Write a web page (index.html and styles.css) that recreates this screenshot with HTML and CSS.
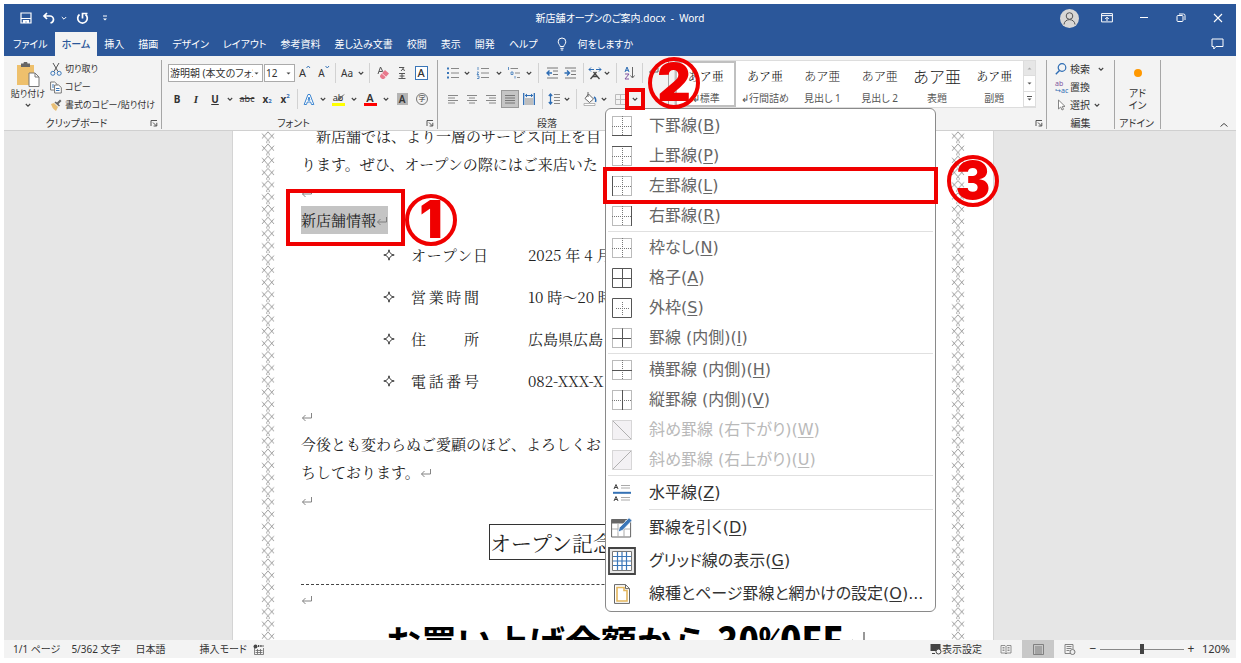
FILE: index.html
```html
<!DOCTYPE html>
<html lang="ja">
<head>
<meta charset="utf-8">
<title>新店舗オープンのご案内.docx - Word</title>
<link rel="stylesheet" href="styles.css">
</head>
<body>
<svg class="defs" width="0" height="0" aria-hidden="true">
  <symbol id="chev" viewBox="0 0 8 8"><path d="M1.8 3 4 5.2 6.2 3" fill="none" stroke="#444" stroke-width="1.1"/></symbol>
  <symbol id="launch" viewBox="0 0 8 8"><path d="M1 7V1.5h6M3 3.500 6.500 7M6.800 3.800V7H3.600" fill="none" stroke="#555"/></symbol>
  <symbol id="ret" viewBox="0 0 12 12"><path d="M10.500 2v5H1.500M4.500 4 1.500 7l3 3" fill="none" stroke="#777" stroke-width=".9"/></symbol>
  <symbol id="dots" viewBox="0 0 20 20"><path d="M.5 .5h19v19H.500zM10.500 0v20M0 10.500h20" fill="none" stroke="#777" stroke-dasharray="1 1"/></symbol>
</svg>
<div class="app">
  <header class="titlebar">
    <div class="quick">
      <button class="ic w20" aria-label="上書き保存"><svg width="12" height="12" viewBox="0 0 12 12"><path d="M1 1h10v10H1zM1 6.500h10M3.500 11V8.500h5V11" fill="none" stroke="#fff" stroke-width="1.200"/><path d="M4 8.500h4V11H6.500V9.500H5.500V11H4z" fill="#fff"/></svg></button>
      <button class="ic w20" aria-label="元に戻す"><svg width="14" height="12" viewBox="0 0 14 12"><path d="M5 1 2 4l3 3M2 4h6a3.500 3.500 0 0 1 3.500 3.500c0 1.500-1 3-3 3.500" fill="none" stroke="#fff" stroke-width="1.700"/></svg></button>
      <button class="ic w10 light" aria-label="元に戻す一覧"><svg width="8" height="8" viewBox="0 0 8 8"><path d="M1.800 3 4 5.200 6.200 3" fill="none" stroke="#fff"/></svg></button>
      <button class="ic w20" aria-label="繰り返し"><svg width="13" height="13" viewBox="0 0 13 13"><path d="M3.500 2.500a4.800 4.800 0 1 0 6 0M6.500 6.500V1.500h5" fill="none" stroke="#fff" stroke-width="1.700"/></svg></button>
      <button class="ic w20" aria-label="カスタマイズ"><svg width="8" height="8" viewBox="0 0 8 8"><path d="M2 2h4" stroke="#fff"/><path d="M2 4.500h4L4 6.500z" fill="#fff"/></svg></button>
    </div>
    <div class="doc-title">新店舗オープンのご案内.docx&nbsp; -&nbsp; Word</div>
    <div class="winctl">
      <button class="ic w37" aria-label="アカウント"><svg width="19" height="19" viewBox="0 0 19 19"><circle cx="9.500" cy="9.500" r="9.500" fill="#d9d7d5"/><circle cx="9.500" cy="7" r="3.300" fill="none" stroke="#555"/><path d="M4 15.500c.5-6.500 10.500-6.500 11 0" fill="none" stroke="#555"/></svg></button>
      <button class="ic w37" aria-label="リボンの表示オプション"><svg width="12" height="10" viewBox="0 0 12 10"><path d="M.6.6h10.800v8.300H.6zM.6 2.600h10.800M6 8V4.500M4.200 6 6 4.200 7.800 6" fill="none" stroke="#fff"/></svg></button>
      <button class="ic w37" aria-label="最小化"><svg width="10" height="10" viewBox="0 0 10 10"><path d="M1 4.500h8" stroke="#fff"/></svg></button>
      <button class="ic w37" aria-label="元のサイズに戻す"><svg width="10" height="10" viewBox="0 0 10 10"><rect x="1" y="2.500" width="6" height="6" rx="1" fill="none" stroke="#fff"/><path d="M3 1h4.500Q9 1 9 2.500V7" fill="none" stroke="#fff"/></svg></button>
      <button class="ic w37" aria-label="閉じる"><svg width="10" height="10" viewBox="0 0 10 10"><path d="m1 1 8 8M9 1 1 9" stroke="#fff" stroke-width="1.100"/></svg></button>
    </div>
  </header>
  <nav class="tabs">
    <button>ファイル</button><button class="active">ホーム</button><button>挿入</button><button>描画</button><button>デザイン</button><button>レイアウト</button><button>参考資料</button><button>差し込み文書</button><button>校閲</button><button>表示</button><button>開発</button><button>ヘルプ</button>
    <button class="tell"><svg width="10" height="14" viewBox="0 0 10 14"><path d="M3.200 9.500C3.200 8 1.200 7 1.200 4.800a3.800 3.800 0 0 1 7.600 0C8.800 7 6.800 8 6.800 9.500zM3.400 11.300h3.200M3.800 13h2.400" fill="none" stroke="#fff"/></svg>何をしますか</button>
    <button class="comment" aria-label="コメント"><svg width="13" height="12" viewBox="0 0 13 12"><path d="M1 1h11v7.500H5L2.800 11V8.500H1z" fill="none" stroke="#fff"/></svg></button>
  </nav>

  <section class="ribbon" aria-label="リボン">
    <div class="group clip">
      <div class="body">
        <button class="paste"><svg width="24" height="25" viewBox="0 0 24 25"><path d="M1 3h17v20H1z" fill="#eec06c"/><path d="M5 1.500h2.500a2 2 0 0 1 4 0H14V5H5z" fill="#666"/><path d="M13 11h6l4 4v9.500H13z" fill="#fff" stroke="#777"/><path d="M19 11v4h4" fill="none" stroke="#777"/></svg><span>貼り付け</span><svg width="8" height="8"><use href="#chev"/></svg></button>
        <div class="stack">
          <button><svg width="12" height="13" viewBox="0 0 12 13"><path d="m3 0 5 8.500M9 0 4 8.500" stroke="#555" fill="none"/><circle cx="2.800" cy="10.300" r="2" fill="none" stroke="#3a76b8"/><circle cx="9.200" cy="10.300" r="2" fill="none" stroke="#3a76b8"/></svg>切り取り</button>
          <button><svg width="12" height="13" viewBox="0 0 12 13"><path d="M.6 1h4L7 3.200V9H.6z" fill="#fff" stroke="#777"/><path d="M4.600 4h4l2.700 2.500V12H4.600z" fill="#fff" stroke="#777"/><path d="M6 7.500h3.500M6 9.500h3.500M2 4h2M2 6h2" stroke="#3a76b8"/></svg>コピー</button>
          <button><svg width="12" height="12" viewBox="0 0 12 12"><path d="m1 5 3-1 4 4-2 4C3 10 2 8 1 5z" fill="#e9bf75"/><path d="m4.500 3.500 4.500 4 1-1L8.500 5l3-3L10 .5l-3 3L5.500 2.500z" fill="#666"/></svg>書式のコピー/貼り付け</button>
        </div>
      </div>
      <div class="label"><span>クリップボード</span><button class="ic w10" aria-label="クリップボード設定"><svg width="8" height="8"><use href="#launch"/></svg></button></div>
    </div>

    <div class="group font">
      <div class="rows">
        <div class="row">
          <label class="combo name"><select aria-label="フォント"><option>游明朝 (本文のフォント)</option></select><svg width="7" height="7" viewBox="0 0 7 7"><path d="M1.500 2.500h4l-2 2z" fill="#444"/></svg></label>
          <label class="combo size"><select aria-label="フォント サイズ"><option>12</option></select><svg width="7" height="7" viewBox="0 0 7 7"><path d="M1.500 2.500h4l-2 2z" fill="#444"/></svg></label>
          <button class="ic w20 g11" aria-label="拡大">A<svg class="top" width="5" height="12" viewBox="0 0 5 12"><path d="m.5 4 1.800-2L4 4" fill="none" stroke="#3a76b8"/></svg></button>
          <button class="ic w18 g10" aria-label="縮小">A<svg class="top" width="5" height="12" viewBox="0 0 5 12"><path d="m.5 2 1.800 2L4 2" fill="none" stroke="#3a76b8"/></svg></button>
          <i class="sep w4"></i>
          <button class="ic w20 g10">Aa</button><button class="ic w8" aria-label="文字種"><svg width="8" height="8"><use href="#chev"/></svg></button>
          <i class="sep w8"></i>
          <button class="ic w20" aria-label="書式のクリア"><svg width="14" height="14" viewBox="0 0 14 14"><path d="m2 8 2.500-7L7 6M3 5.500h3" fill="none" stroke="#555"/><path d="m4 9.500 5-5.500 4 3.500-5 5.500H6L4 11z" fill="#e8798c"/><path d="m6 7.500 4 3.500" stroke="#fff" stroke-width=".7"/></svg></button>
          <button class="ic w18 ruby" aria-label="ルビ"><svg width="10" height="14" viewBox="0 0 10 14"><path d="M2 1.500h5L4 5M5 3l3 1.500M2 7.500h6M5 7.500v5M1.500 12.500h7M2.500 10h5" fill="none" stroke="#555"/></svg></button>
          <button class="ic w20 boxed"><span>A</span></button>
        </div>
        <div class="row">
          <button class="ic w18 b">B</button><button class="ic w20 b it">I</button><button class="ic w18 b"><u>U</u></button><button class="ic w12" aria-label="下線"><svg width="8" height="8"><use href="#chev"/></svg></button>
          <button class="ic w22 g9"><s>abc</s></button><button class="ic w18 b">x<sub>2</sub></button><button class="ic w18 b">x<sup>2</sup></button>
          <i class="sep w6"></i>
          <button class="ic w18" aria-label="文字の効果"><svg width="12" height="13" viewBox="0 0 12 13"><path d="M1.200 11.500 5 1.500h2l3.800 10H8.500L7.700 9H4.300l-.8 2.500zM5 7.200h2L6 4z" fill="#fff" stroke="#3a84d0"/></svg></button><button class="ic w10" aria-label="効果一覧"><svg width="8" height="8"><use href="#chev"/></svg></button>
          <button class="ic w20 hl" aria-label="蛍光ペン"><span class="mark">ab</span><svg class="pen" width="12" height="9" viewBox="0 0 12 9"><path d="m11 .8-5 6-3 1.400 1-3z" fill="#666"/></svg></button><button class="ic w12" aria-label="蛍光ペンの色"><svg width="8" height="8"><use href="#chev"/></svg></button>
          <button class="ic w20"><span class="mark red">A</span></button><button class="ic w12" aria-label="文字色"><svg width="8" height="8"><use href="#chev"/></svg></button>
          <button class="ic w20"><span class="shade">A</span></button>
          <button class="ic w20"><span class="ring">字</span></button>
        </div>
      </div>
      <div class="label"><span>フォント</span><button class="ic w10" aria-label="フォント設定"><svg width="8" height="8"><use href="#launch"/></svg></button></div>
    </div>

    <div class="group para">
      <div class="rows">
        <div class="row">
          <button class="ic w20" aria-label="箇条書き"><svg width="14" height="12" viewBox="0 0 14 12"><path d="M1 1.500h2M1 6h2M1 10.500h2" stroke="#3a76b8" stroke-width="2"/><path d="M5 1.500h8M5 6h8M5 10.500h8" stroke="#888"/></svg></button><button class="ic w8" aria-label="行頭文字"><svg width="8" height="8"><use href="#chev"/></svg></button>
          <button class="ic w24" aria-label="段落番号"><svg width="14" height="12" viewBox="0 0 14 12"><path d="M2 0v3M1 5h1.500L1 7.500h2M1 9h2v2.500H1" stroke="#3a76b8" fill="none" stroke-width=".8"/><path d="M5 1.500h8M5 6h8M5 10.500h8" stroke="#888"/></svg></button><button class="ic w8" aria-label="番号書式"><svg width="8" height="8"><use href="#chev"/></svg></button>
          <button class="ic w22" aria-label="アウトライン"><svg width="14" height="12" viewBox="0 0 14 12"><path d="M1.500 0v3M4 5h2v2.500H4zM8 9v2.500" stroke="#3a76b8" fill="none" stroke-width=".8"/><path d="M3.500 1.500H11M8 6h5M10 10.500h3" stroke="#888"/></svg></button><button class="ic w8" aria-label="リスト"><svg width="8" height="8"><use href="#chev"/></svg></button>
          <i class="sep w10"></i>
          <button class="ic w18" aria-label="インデントを減らす"><svg width="13" height="12" viewBox="0 0 13 12"><path d="M1 1h11M7 4h5M7 7.500h5M1 11h11" stroke="#777"/><path d="M6 6H1.500M3.500 3.500 1 6l2.500 2.500" fill="none" stroke="#2e6db4" stroke-width="1.400"/></svg></button>
          <button class="ic w18" aria-label="インデントを増やす"><svg width="13" height="12" viewBox="0 0 13 12"><path d="M1 1h11M7 4h5M7 7.500h5M1 11h11" stroke="#777"/><path d="M.5 6H5M3 3.500 5.500 6 3 8.500" fill="none" stroke="#2e6db4" stroke-width="1.400"/></svg></button>
          <i class="sep w8"></i>
          <button class="ic w16" aria-label="拡張書式"><svg width="14" height="13" viewBox="0 0 14 13"><path d="M1 2.500h5M8 2.500h5M3 .5l-2 2 2 2M11 .5l2 2-2 2" fill="none" stroke="#2e6db4"/><path d="m2.500 12 6-7M11.500 12l-6-7M4.500 9.500h5" fill="none" stroke="#444" stroke-width="1.300"/></svg></button><button class="ic w8" aria-label="拡張書式一覧"><svg width="8" height="8"><use href="#chev"/></svg></button>
          <i class="sep w10"></i>
          <button class="ic w18" aria-label="並べ替え"><svg width="12" height="14" viewBox="0 0 12 14"><path d="m1 6 2-5 2 5M1.700 4.300h2.600" fill="none" stroke="#2e6db4"/><path d="M1 8h4l-4 5h4" fill="none" stroke="#8054a0"/><path d="M8.500 1v10.500M6.500 9.500l2 2.500 2-2.500" fill="none" stroke="#666"/></svg></button>
          <i class="sep w6"></i>
          <button class="ic w16" aria-label="編集記号"><svg width="12" height="12" viewBox="0 0 12 12"><path d="M11 1v4H3M5 2.500 2.500 5 5 7.500" fill="none" stroke="#666"/></svg></button>
        </div>
        <div class="row">
          <button class="ic w20" aria-label="左揃え"><svg width="10" height="10" viewBox="0 0 10 10"><path d="M0 1.500h10M0 4h7M0 6.500h10M0 9h7" stroke="#888"/></svg></button>
          <button class="ic w18" aria-label="中央揃え"><svg width="10" height="10" viewBox="0 0 10 10"><path d="M0 1.500h10M2 4h6M0 6.500h10M2 9h6" stroke="#888"/></svg></button>
          <button class="ic w20" aria-label="右揃え"><svg width="10" height="10" viewBox="0 0 10 10"><path d="M0 1.500h10M3 4h7M0 6.500h10M3 9h7" stroke="#888"/></svg></button>
          <button class="ic w18 on" aria-label="両端揃え"><svg width="10" height="10" viewBox="0 0 10 10"><path d="M0 1.500h10M0 4h10M0 6.500h10M0 9h10" stroke="#777"/></svg></button>
          <button class="ic w20" aria-label="均等割り付け"><svg width="12" height="12" viewBox="0 0 12 12"><path d="M.7 0v12M11.300 0v12" stroke="#2e6db4" stroke-width="1.300"/><path d="M2 2.500h8M4 1 2.300 2.500 4 4M8 1l1.700 1.500L8 4" stroke="#2e6db4" fill="none"/><path d="M2 6h8M2 8h8M2 10h8M2 12h8" stroke="#888"/></svg></button>
          <i class="sep w6"></i>
          <button class="ic w18" aria-label="行間"><svg width="12" height="12" viewBox="0 0 12 12"><path d="M2.500 1v10M.8 3l1.700-2 1.700 2M.8 9l1.700 2 1.700-2" stroke="#2e6db4" fill="none" stroke-width="1.200"/><path d="M6 1.500h6M6 4.500h6M6 7.500h6M6 10.500h6" stroke="#888"/></svg></button><button class="ic w8" aria-label="行間一覧"><svg width="8" height="8"><use href="#chev"/></svg></button>
          <i class="sep w10"></i>
          <button class="ic w18" aria-label="塗りつぶし"><svg width="14" height="14" viewBox="0 0 14 14"><path d="m5.500 2 5 5-4 3.500-4.500-4zM5 0v5" fill="#fff" stroke="#666"/><path d="M11 5c2 1 2 3 1.500 5" stroke="#2e6db4" stroke-width="1.500" fill="none"/><path d="M1 11.500h11v2H1z" fill="#fff" stroke="#999" stroke-width=".7"/></svg></button><button class="ic w10" aria-label="塗りつぶしの色"><svg width="8" height="8"><use href="#chev"/></svg></button>
          <button class="ic w22" aria-label="罫線"><svg width="11" height="11" viewBox="0 0 11 11"><path d="M.5 .5h10v10H.500zM5.500 0v11M0 5.500h11" fill="none" stroke="#bbb"/></svg></button><button class="ic w8" aria-label="罫線一覧" aria-expanded="true"><svg width="8" height="8"><use href="#chev"/></svg></button>
        </div>
      </div>
      <div class="label"><span>段落</span><i class="w10"></i></div>
    </div>

    <div class="group styles">
      <div class="gallery">
        <button class="sel"><b>あア亜</b><span>↲標準</span></button>
        <button><b>あア亜</b><span>↲行間詰め</span></button>
        <button><b class="go">あア亜</b><span>見出し 1</span></button>
        <button><b class="go">あア亜</b><span>見出し 2</span></button>
        <button><b class="go big">あア亜</b><span>表題</span></button>
        <button><b>あア亜</b><span>副題</span></button>
        <div class="scroll">
          <button class="dim" aria-label="上へ"><svg width="7" height="7" viewBox="0 0 7 7"><path d="M1.500 4.500h4l-2-2z" fill="#aaa"/></svg></button>
          <button aria-label="下へ"><svg width="7" height="7" viewBox="0 0 7 7"><path d="M1.500 2.500h4l-2 2z" fill="#555"/></svg></button>
          <button aria-label="その他"><svg width="7" height="7" viewBox="0 0 7 7"><path d="M1 1.500h5" stroke="#555"/><path d="M1.500 3.500h4l-2 2z" fill="#555"/></svg></button>
        </div>
      </div>
      <div class="label"><span></span><button class="ic w10" aria-label="スタイル設定"><svg width="8" height="8"><use href="#launch"/></svg></button></div>
    </div>

    <div class="group edit">
      <div class="stack">
        <button><svg width="12" height="12" viewBox="0 0 12 12"><circle cx="7" cy="4.500" r="3.800" fill="none" stroke="#2e6db4" stroke-width="1.200"/><path d="M4.500 7.500.8 11.200" stroke="#2e6db4" stroke-width="1.400"/></svg>検索<svg class="far" width="8" height="8"><use href="#chev"/></svg></button>
        <button><span class="abac"><em>ab</em><span>↪ac</span></span>置換</button>
        <button><svg width="12" height="12" viewBox="0 0 12 12"><path d="M3.500 1v9l2.200-2L7 11l1.500-.7L7.200 7.400H10z" fill="#fff" stroke="#777" stroke-width=".9"/></svg>選択<svg width="8" height="8"><use href="#chev"/></svg></button>
      </div>
      <div class="label"><span>編集</span></div>
    </div>
    <div class="group addin">
      <button class="addbtn"><svg width="10" height="10" viewBox="0 0 10 10"><circle cx="5" cy="5" r="4" fill="#ff9800"/></svg><span>アド<br>イン</span></button>
      <div class="label"><span>アドイン</span></div>
    </div>
    <button class="collapse" aria-label="リボンを折りたたむ"><svg width="10" height="8" viewBox="0 0 10 8"><path d="m1.500 5.500 3.500-3 3.500 3" fill="none" stroke="#444"/></svg></button>
  </section>

  <main class="canvas">
    <article class="page">
      <svg class="edge" width="14" height="100%"><defs><pattern id="lace" width="14" height="12.200" patternUnits="userSpaceOnUse"><path d="m1 2.500 6 6.700 6-6.700M1 7.500 7 .8l6 6.700" fill="none" stroke="#888" stroke-width=".8"/><circle cx="7" cy="11.200" r="1.500" fill="none" stroke="#999" stroke-width=".7"/></pattern></defs><rect width="14" height="100%" fill="url(#lace)"/></svg>
      <div class="text">
        <p class="indent">新店舗では、より一層のサービス向上を目</p>
        <p>ります。ぜひ、オープンの際にはご来店いた</p>
        <p><svg width="12" height="12"><use href="#ret"/></svg></p>
        <p><mark>新店舗情報<svg width="12" height="12"><use href="#ret"/></svg></mark></p>
        <ul>
          <li><svg width="12" height="12"  viewBox="0 0 12 12"><path d="M6 .8Q6.500 5.500 11.200 6 6.500 6.500 6 11.200 5.500 6.500.8 6 5.500 5.500 6 .8z" fill="#fff" stroke="#222" stroke-width=".9"/></svg><span class="even">オープン日</span><span>2025 年 4 月</span></li>
          <li><svg width="12" height="12" viewBox="0 0 12 12"><path d="M6 .8Q6.500 5.500 11.200 6 6.500 6.500 6 11.200 5.500 6.500.8 6 5.500 5.500 6 .8z" fill="#fff" stroke="#222" stroke-width=".9"/></svg><span class="even four">営業時間</span><span>10 時～20 時</span></li>
          <li><svg width="12" height="12" viewBox="0 0 12 12"><path d="M6 .8Q6.500 5.500 11.200 6 6.500 6.500 6 11.200 5.500 6.500.8 6 5.500 5.500 6 .8z" fill="#fff" stroke="#222" stroke-width=".9"/></svg><span class="even four">住所</span><span>広島県広島</span></li>
          <li><svg width="12" height="12" viewBox="0 0 12 12"><path d="M6 .8Q6.500 5.500 11.200 6 6.500 6.500 6 11.200 5.500 6.500.8 6 5.500 5.500 6 .8z" fill="#fff" stroke="#222" stroke-width=".9"/></svg><span class="even four">電話番号</span><span>082-XXX-X</span></li>
        </ul>
        <p><svg width="12" height="12"><use href="#ret"/></svg></p>
        <p>今後とも変わらぬご愛顧のほど、よろしくお</p>
        <p>ちしております。<svg width="12" height="12"><use href="#ret"/></svg></p>
        <p><svg width="12" height="12"><use href="#ret"/></svg></p>
        <div class="event">オープン記念</div>
        <hr>
        <p><svg width="12" height="12"><use href="#ret"/></svg></p>
        <h1>お買い上げ金額から <span class="off">30%OFF</span><svg width="24" height="30" viewBox="0 0 24 30"><path d="M21 4v18H3M10 12l-8 9 8 8" fill="none" stroke="#777" stroke-width="1.500"/></svg></h1>
      </div>
      <svg class="edge" width="14" height="100%"><rect width="14" height="100%" fill="url(#lace)"/></svg>
    </article>
  </main>

  <footer class="status">
    <span class="s1">1/1 ページ</span><span class="s2">5/362 文字</span><span class="s3">日本語</span><span class="s4">挿入モード</span>
    <svg width="11" height="11" viewBox="0 0 11 11"><path d="M1.500 4v6.500h9V4M2.500 6.500h7M2.500 8.500h7M4.500 5v5M7.500 5v5" fill="none" stroke="#666" stroke-width=".8"/><circle cx="2.500" cy="2.500" r="2" fill="#444"/><path d="M5 2h5.500" stroke="#444" stroke-width="2" stroke-dasharray="1 .7"/></svg>
    <div class="views">
      <button class="disp"><svg width="12" height="12" viewBox="0 0 12 12"><path d="M.5 1h10v7H.500z" fill="#444"/><circle cx="8.500" cy="8.500" r="2.500" fill="#f3f3f3" stroke="#444"/><path d="M2 10.500h3" stroke="#444"/></svg>表示設定</button>
      <button class="ic w32" aria-label="閲覧モード"><svg width="12" height="11" viewBox="0 0 12 11"><path d="M1 1.500h4l1 1 1-1h4v7.500H7l-1 1-1-1H1zM6 2.500V10M2.500 3.500h2M2.500 5h2M2.500 6.500h2M7.500 3.500h2M7.500 5h2M7.500 6.500h2" fill="none" stroke="#777" stroke-width=".8"/></svg></button>
      <button class="ic w32 active" aria-label="印刷レイアウト"><svg width="11" height="11" viewBox="0 0 11 11"><path d="M.5 .5h10v10H.500zM2 3h7M2 5h7M2 7h7M2 9h7" fill="none" stroke="#777" stroke-width=".9"/></svg></button>
      <button class="ic w32" aria-label="Web レイアウト"><svg width="12" height="11" viewBox="0 0 12 11"><path d="M7 9.500H1v-9h8V5M2.500 2.500h5M2.500 4.500h5M2.500 6.500h3" fill="none" stroke="#777" stroke-width=".9"/><circle cx="8.500" cy="8" r="2.500" fill="#eee" stroke="#777"/></svg></button>
      <button class="zoomb" aria-label="縮小">−</button><input type="range" min="0" max="100" value="50" aria-label="ズーム"><button class="zoomb" aria-label="拡大">+</button>
      <span class="pct">120%</span>
    </div>
  </footer>

  <div class="menu" role="menu">
    <button role="menuitem"><svg width="20" height="20"><use href="#dots"/><path d="M0 19.500h20" stroke="#555"/></svg><span>下罫線(<u>B</u>)</span></button>
    <button role="menuitem"><svg width="20" height="20"><use href="#dots"/><path d="M0 .5h20" stroke="#555"/></svg><span>上罫線(<u>P</u>)</span></button>
    <button role="menuitem"><svg width="20" height="20"><use href="#dots"/><path d="M.5 0v20" stroke="#555"/></svg><span>左罫線(<u>L</u>)</span></button>
    <button role="menuitem"><svg width="20" height="20"><use href="#dots"/><path d="M19.500 0v20" stroke="#555"/></svg><span>右罫線(<u>R</u>)</span></button>
    <hr>
    <button role="menuitem"><svg width="20" height="20"><use href="#dots"/></svg><span>枠なし(<u>N</u>)</span></button>
    <button role="menuitem"><svg width="20" height="20"><path d="M.5 .5h19v19H.500zM10.500 0v20M0 10.500h20" fill="none" stroke="#555"/></svg><span>格子(<u>A</u>)</span></button>
    <button role="menuitem"><svg width="20" height="20"><path d="M.5 .5h19v19H.500z" fill="none" stroke="#555"/><path d="M10.500 4v13M4 10.500h13" stroke="#777" stroke-dasharray="1 1"/></svg><span>外枠(<u>S</u>)</span></button>
    <button role="menuitem"><svg width="20" height="20"><use href="#dots"/><path d="M10.500 1v18M1 10.500h18" stroke="#555"/></svg><span>罫線 (内側)(<u>I</u>)</span></button>
    <hr>
    <button role="menuitem"><svg width="20" height="20"><use href="#dots"/><path d="M0 10.500h20" stroke="#555"/></svg><span>横罫線 (内側)(<u>H</u>)</span></button>
    <button role="menuitem"><svg width="20" height="20"><use href="#dots"/><path d="M10.500 0v20" stroke="#555"/></svg><span>縦罫線 (内側)(<u>V</u>)</span></button>
    <button role="menuitem" disabled><svg width="20" height="20"><path d="M.5 .5h19v19H.500z" fill="#f3f1f4" stroke="#b5b5b5" stroke-dasharray="1 1"/><path d="m1 1 18 18" stroke="#b0b0b0"/></svg><span>斜め罫線 (右下がり)(<u>W</u>)</span></button>
    <button role="menuitem" disabled><svg width="20" height="20"><path d="M.5 .5h19v19H.500z" fill="#f3f1f4" stroke="#b5b5b5" stroke-dasharray="1 1"/><path d="M1 19 19 1" stroke="#b0b0b0"/></svg><span>斜め罫線 (右上がり)(<u>U</u>)</span></button>
    <hr>
    <button role="menuitem" class="dark"><svg width="20" height="20" viewBox="0 0 20 20"><path d="m2 6 2-4.500L6 6M2.700 4.500h2.600M2 18l2-4.500L6 18M2.700 16.500h2.600" fill="none" stroke="#444"/><path d="M9 2.500h9M9 5h9M9 14.500h9M9 17h9" stroke="#aaa"/><path d="M1 9.800h18" stroke="#3572b5" stroke-width="2"/></svg><span>水平線(<u>Z</u>)</span></button>
    <hr class="inset">
    <button role="menuitem" class="dark tall"><svg width="22" height="21" viewBox="0 0 22 21"><path d="M.6 2.500h19v17.500H.6z" fill="#fff" stroke="#666"/><path d="M.6 2.500h14v4H.6z" fill="#666"/><path d="M1 12h18M7 7v13M13 7v13" stroke="#aaa"/><path d="m7 15 1.500-4.500L18 .8l3 2.700-9.500 9.800z" fill="#3a76b8" stroke="#fff" stroke-width=".7"/></svg><span>罫線を引く(<u>D</u>)</span></button>
    <button role="menuitem" class="dark tall checked"><svg width="28" height="28" viewBox="0 0 28 28"><path d="M1 1h26v26H1z" fill="#e8e8e8" stroke="#444" stroke-width="1.800"/><path d="M4.500 4.500h19v19h-19z" fill="#fff" stroke="#777"/><path d="M9.500 5v18M14 5v18M18.500 5v18M5 9.500h18M5 14h18M5 18.500h18" stroke="#3a76b8" stroke-width="1.200"/></svg><span>グリッド線の表示(<u>G</u>)</span></button>
    <button role="menuitem" class="dark tall"><svg width="20" height="20" viewBox="0 0 20 20"><path d="M2.500.6h11l4 4v14.800h-15z" fill="#fff" stroke="#666"/><path d="M5 3.500h7v3h3V17H5z" fill="none" stroke="#e3b65e" stroke-width="1.600"/><path d="M13.500.6v4h4" fill="none" stroke="#666"/></svg><span>線種とページ罫線と網かけの設定(<u>O</u>)...</span></button>
  </div>

  <div class="frame f1"></div><div class="frame f2"></div><div class="frame f3"></div>
  <div class="num n1">1</div><div class="num n2">2</div><div class="num n3">3</div>
</div>
</body>
</html>
```
FILE: styles.css
```css
* { box-sizing: border-box; }
body {
  margin: 0;
  background: #fff;
  color: #333;
  font: 10px/14px "Noto Sans", "Noto Sans CJK JP", sans-serif;
  font-feature-settings: "palt";
}
.defs { position: absolute; }
button {
  margin: 0; padding: 0; border: 0; background: none;
  color: inherit; font: inherit; font-feature-settings: inherit; white-space: nowrap;
}
svg { display: block; flex: none; }
.app {
  position: relative;
  display: flex; flex-direction: column;
  height: 100vh;
  border: 4px solid #fff; border-right-width: 5px; border-bottom-width: 5px;
}

/* Fixed-size icon cells */
.ic { display: flex; align-items: center; justify-content: center; flex: none; height: 18px; }
.w4 { width: 4px; } .w6 { width: 6px; } .w8 { width: 8px; } .w10 { width: 10px; }
.w12 { width: 12px; } .w16 { width: 16px; } .w18 { width: 18px; } .w20 { width: 20px; }
.w22 { width: 22px; } .w24 { width: 24px; } .w32 { width: 32px; } .w37 { width: 37px; }
.sep {
  flex: none; height: 20px;
  background: linear-gradient(#d2d2d2, #d2d2d2) center / 1px 100% no-repeat;
}

/* Title bar */
.titlebar {
  display: grid; grid-template-columns: 1fr auto 1fr; align-items: center;
  flex: none; height: 28px;
  background: #2b579a; color: #fff;
}
.quick { display: flex; align-items: center; padding-left: 12px; gap: 3px; }
.quick .w10 { margin-left: -3px; }
.doc-title { font-size: 10px; }
.winctl { display: flex; justify-content: flex-end; }
.tabs { display: flex; flex: none; height: 24px; background: #2b579a; color: #fff; padding-left: 2px; }
.tabs button { padding: 0 7px; }
.tabs .active { background: #f3f3f3; color: #2b579a; font-weight: 500; }
.tabs .tell { display: flex; align-items: center; gap: 11px; padding-left: 12px; }
.tabs .comment { margin-left: auto; padding: 0 12px; }

/* Ribbon */
.ribbon {
  display: flex; flex: none; height: 75px; padding: 4px 0 0;
  background: #f3f3f3; border-bottom: 1px solid #d0d0d0;
}
.group { display: flex; flex-direction: column; flex: none; border-right: 1px solid #a6a6a6; height: 69px; }
.label { display: flex; align-items: center; margin-top: auto; height: 12px; padding-right: 2px; }
.label span { flex: 1; text-align: center; }
.clip { width: 158px; }
.body { display: flex; font-size: 9px; }
.paste { display: flex; flex-direction: column; align-items: center; width: 46px; padding: 2px 0 0 2px; }
.stack { display: flex; flex-direction: column; }
.stack button { display: flex; align-items: center; height: 18px; gap: 3px; }
.font { width: 276px; }
.font .rows { padding-left: 6px; }
.para { width: 231px; }
.para .rows { padding-left: 5px; }
.rows { display: flex; flex-direction: column; gap: 8px; padding-top: 4px; }
.row { display: flex; align-items: center; height: 18px; }
.combo { display: flex; align-items: center; height: 18px; background: #fff; border: 1px solid #ababab; padding-right: 2px; }
.combo select {
  flex: 1; min-width: 0; width: 100%; padding: 0 0 0 1px;
  appearance: none; border: 0; background: none;
  font: inherit; font-feature-settings: inherit; color: inherit; text-overflow: clip;
}
.name { width: 95px; margin-right: 1px; }
.size { width: 31px; }
.g11 { font-size: 11px; } .g10 { font-size: 10px; } .g9 { font-size: 9px; }
.top { align-self: flex-start; }
.b { font-weight: 700; font-size: 10px; }
.it { font-style: italic; font-family: "Liberation Serif", serif; font-size: 11px; }
.b sub, .b sup { font-size: 6px; line-height: 6px; color: #2e6db4; }
.b sub { align-self: flex-end; margin-bottom: 4px; }
.b sup { align-self: flex-start; margin-top: 3px; }
.boxed span { border: 1px solid #3a76b8; background: #fff; width: 13px; line-height: 12px; font-size: 11px; font-weight: 500; }
.mark { border-bottom: 3px solid #ff0; line-height: 10px; width: 13px; font-size: 9px; }
.red { border-color: #f00; font-size: 11px; font-weight: 600; }
.hl { position: relative; }
.pen { position: absolute; right: 2px; top: 3px; }
.shade { background: #b4b4b4; width: 11px; line-height: 12px; font-weight: 600; }
.ring { border: 1px solid #777; border-radius: 50%; width: 12px; height: 12px; font-size: 7px; line-height: 10px; }
.on { background: #c5c5c5; border: 1px solid #999; }

.styles { width: 378px; }
.gallery { display: flex; height: 48px; margin: 0 10px 0 5px; background: #fff; border: 1px solid #ddd; }
.gallery > button { display: flex; flex-direction: column; align-items: center; justify-content: space-between; flex: 1; padding: 5px 0 2px; }
.gallery b { font: 400 12px/20px "Noto Serif CJK JP", "Noto Sans CJK JP", serif; color: #222; font-feature-settings: normal; }
.gallery .go { font-family: "Noto Sans CJK JP", sans-serif; font-weight: 300; }
.gallery .big { font-size: 16px; }
.gallery span { color: #555; }
.gallery .sel { border: 2px solid #c0c0c0; padding: 3px 0 0; }
.scroll { display: flex; flex-direction: column; width: 12px; }
.scroll button { display: flex; align-items: center; justify-content: center; flex: 1; border: 1px solid #ddd; border-width: 0 0 1px 1px; }
.scroll .dim { background: #e6e6e6; }
.edit { width: 68px; padding-left: 8px; }
.edit .label { padding-right: 8px; }
.edit .far { margin-left: 4px; }
.abac { display: flex; flex-direction: column; width: 12px; font-size: 7px; line-height: 7px; color: #2e6db4; }
.abac em { font-style: normal; color: #8054a0; text-align: left; }
.addin { width: 46px; }
.addbtn { display: flex; flex-direction: column; align-items: center; gap: 9px; padding-top: 8px; line-height: 12px; }
.collapse { margin: auto 7px 0 auto; padding-bottom: 1px; }

/* Document */
.canvas { flex: 1; min-height: 0; overflow: hidden; background: #e6e6e6; padding-right: 14px; }
.page {
  display: flex; justify-content: space-between;
  width: 762px; height: 100%; margin: 0 auto; padding: 0 28px;
  background: #fff; border: 1px solid #d4d4d4; border-width: 0 1px;
}
.edge { height: 100%; }
.text {
  flex: 1; margin-top: -9px; padding: 0 26px;
  font: 400 15px/28px "Noto Serif CJK JP", "Noto Sans CJK JP", serif;
  font-feature-settings: normal; color: #222;
}
.text p { margin: 0; height: 28px; white-space: nowrap; }
.text svg { display: inline-block; vertical-align: -1px; }
.indent { padding-left: 15px; }
mark { display: inline-block; background: #c4c4c4; color: inherit; }
ul { list-style: none; margin: 0; padding: 0 0 0 82px; }
li { display: flex; align-items: center; height: 42px; white-space: nowrap; }
.even { width: 77px; margin: 0 40px 0 16px; text-align-last: justify; }
.four { width: 68px; margin-right: 49px; }
.event {
  width: 248px; margin: 10px auto 0;
  border: 1px solid #333; font-size: 21px; line-height: 34px; white-space: nowrap;
}
.text hr { margin: 24px 0 0; border: 0; border-top: 1px dashed #444; }
h1 { margin: 4px 0 0; padding-left: 84px; font: 700 36px/44px "Noto Sans CJK JP", sans-serif; color: #000; white-space: nowrap; }
.off { font-feature-settings: "hwid"; font-size: 42px; }

/* Status bar */
.status { display: flex; align-items: center; flex: none; height: 18px; padding-left: 9px; background: #f3f3f3; }
.s1 { margin-right: 11px; }
.s2 { margin-right: 15px; }
.s3 { margin-right: 34px; }
.s4 { margin-right: 6px; }
.views { display: flex; align-items: center; margin-left: auto; padding-right: 6px; }
.disp { display: flex; align-items: center; margin-right: 8px; }
.views .active { background: #c8c8c8; }
.zoomb { width: 14px; font-size: 12px; }
.views input { appearance: none; width: 84px; height: 12px; margin: 0; background: linear-gradient(#888, #888) center / 100% 1px no-repeat; }
.views input::-webkit-slider-thumb { appearance: none; width: 4px; height: 10px; background: #444; }
.pct { width: 32px; text-align: right; font-size: 11px; }

/* Borders drop-down */
.menu {
  position: absolute; left: 601px; top: 104px; width: 331px;
  padding: 2px 1px 1px; background: #fff; border: 1px solid #8a8a8a; border-radius: 6px;
  color: #666; font: 400 16px/24px "DejaVu Sans", "Noto Sans CJK JP", sans-serif;
  font-feature-settings: "palt";
}
.menu button { display: grid; grid-template-columns: 28px 1fr; gap: 13px; align-items: center; justify-items: center; width: 100%; height: 30px; padding: 0 2px 0 1px; }
.menu button span { justify-self: start; }
.menu u { text-underline-offset: 2px; text-decoration-thickness: 1px; }
.menu button:disabled { color: #b9b9b9; }
.menu .dark { color: #333; height: 32px; }
.menu .tall { height: 33px; }
.menu hr { margin: 0 1px 1px; border: 0; border-top: 1px solid #e0e0e0; }
.menu .inset { margin-left: 42px; }

/* Callouts */
.frame { position: absolute; border: 4px solid #f00000; }
.f1 { left: 282px; top: 185px; width: 119px; height: 57px; }
.f2 { left: 621px; top: 84px; width: 20px; height: 22px; }
.f3 { left: 599px; top: 163px; width: 335px; height: 37px; }
.num {
  position: absolute; width: 52px; height: 52px;
  border: 4px solid #f00000; border-radius: 50%;
  color: #f00000; font: 900 52px/44px Inter, "Liberation Sans", sans-serif; text-align: center;
}
.n1 { left: 401px; top: 190px; }
.n2 { left: 644px; top: 53px; }
.n3 { left: 943px; top: 151px; }
```
